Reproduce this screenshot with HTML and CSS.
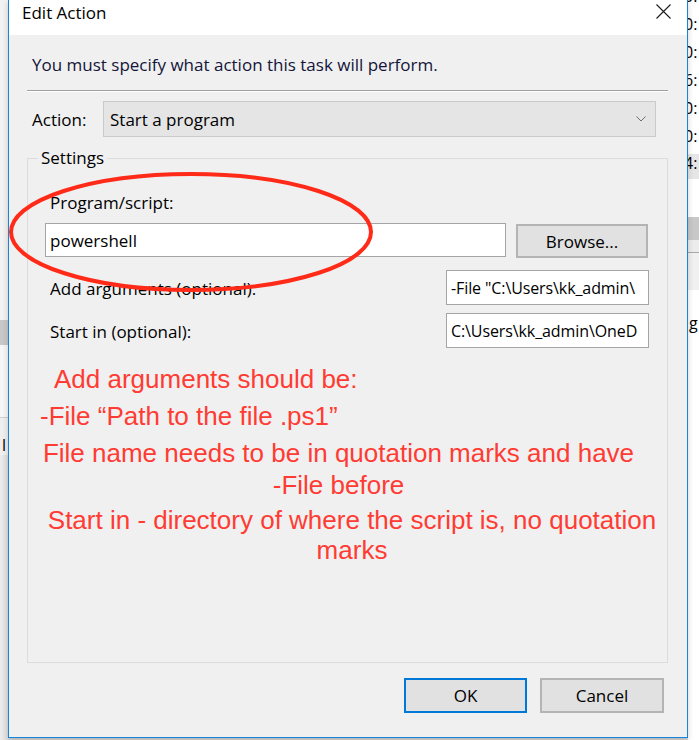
FILE: index.html
```html
<!DOCTYPE html>
<html>
<head>
<meta charset="utf-8">
<link rel="stylesheet" href="styles.css">
</head>
<body>
<div class="screen">
  <div class="bg-left">
    <div class="bl-top"></div>
    <div class="bl-bar"></div>
    <div class="bl-mid"></div>
    <div class="bl-text">l</div>
    <div class="bl-rest"></div>
  </div>

  <div class="dialog">
    <div class="titlebar">
      <span class="title">Edit Action</span>
      <svg class="close" width="15" height="15" viewBox="0 0 15 15"><path d="M0.5 0.5 L14.5 14.5 M14.5 0.5 L0.5 14.5" stroke="#1a1a1a" stroke-width="1.1" fill="none"/></svg>
    </div>
    <div class="body">
      <p class="instruction">You must specify what action this task will perform.</p>
      <div class="sep"></div>
      <div class="action-row">
        <span class="action-label">Action:</span>
        <div class="combo">
          <span>Start a program</span>
          <svg class="chev" width="10" height="6" viewBox="0 0 10 6"><path d="M0.5 0.5 L5 5 L9.5 0.5" stroke="#6d6d6d" stroke-width="1" fill="none"/></svg>
        </div>
      </div>
      <fieldset class="settings">
        <legend>Settings</legend>
        <div class="lbl">Program/script:</div>
        <div class="prog-row">
          <div class="input wide">powershell</div>
          <div class="btn browse">Browse...</div>
        </div>
        <div class="field-row first">
          <span class="lbl">Add arguments (optional):</span>
          <div class="input narrow">-File "C:\Users\kk_admin\</div>
        </div>
        <div class="field-row">
          <span class="lbl">Start in (optional):</span>
          <div class="input narrow">C:\Users\kk_admin\OneD</div>
        </div>
        <div class="notes">
          <p class="n1">Add arguments should be:</p>
          <p class="n2">-File “Path to the file .ps1”</p>
          <p class="n3">File name needs to be in quotation marks and have<br>-File before</p>
          <p class="n4">Start in - directory of where the script is, no quotation<br>marks</p>
        </div>
      </fieldset>
      <div class="buttons">
        <div class="btn ok">OK</div>
        <div class="btn cancel">Cancel</div>
      </div>
    </div>
    <svg class="ellipse" width="400" height="320" viewBox="0 0 400 320"><ellipse cx="182" cy="232" rx="180" ry="58" fill="none" stroke="#ff2a17" stroke-width="4"/></svg>
  </div>

  <div class="bg-right">
    <div class="r-line">0:</div>
    <div class="r-line">0:</div>
    <div class="r-line">0:</div>
    <div class="r-line">6:</div>
    <div class="r-line">0:</div>
    <div class="r-line">0:</div>
    <div class="r-line hl">4:</div>
    <div class="r-gap"></div>
    <div class="r-bar"></div>
    <div class="r-light"></div>
    <div class="r-panel"></div>
    <div class="r-text">g</div>
  </div>
</div>
</body>
</html>
```

FILE: styles.css
```css
* { box-sizing: border-box; }
html, body { margin: 0; padding: 0; }
body {
  width: 699px;
  height: 740px;
  overflow: hidden;
  background: #d6d6d6;
  font-family: "Segoe UI", "Open Sans", "Noto Sans", sans-serif;
  color: #000;
}
.screen { display: flex; height: 740px; align-items: flex-start; }

/* background window, left */
.bg-left { width: 8px; height: 740px; display: flex; flex-direction: column; background: #efefef; overflow: hidden; }
.bl-top { height: 320px; background: #f2f2f2; }
.bl-bar { height: 25px; background: #c8c8c8; }
.bl-mid { height: 73px; background: #f6f6f6; border-bottom: 1px solid #cfcfcf; }
.bl-text { font-size: 16px; line-height: 20px; margin-top: 17px; padding-left: 2px; white-space: nowrap; }
.bl-rest { flex: 1; background: linear-gradient(to right, #ececec, #dedede); }

/* dialog */
.dialog {
  position: relative;
  width: 680px;
  height: 738px;
  background: #f0f0f0;
  border: 1px solid #1883d7;
  border-top: none;
  display: flex;
  flex-direction: column;
  box-shadow: 0 2px 6px rgba(0,0,0,0.18);
}
.titlebar {
  height: 35px;
  background: #fff;
  display: flex;
  justify-content: space-between;
  align-items: flex-start;
  padding: 0 16px 0 13px;
  flex: none;
}
.title { font-size: 17px; line-height: 24px; margin-top: 1px; }
.close { margin-top: 4px; }

.body { flex: 1; display: flex; flex-direction: column; padding: 0 0 24px 0; }
.instruction { margin: 20px 0 0 23px; font-size: 17px; line-height: 20px; color: #14143a; }
.sep { margin: 15px 0 0 18px; width: 641px; height: 2px; border-top: 1px solid #a0a0a0; border-bottom: 1px solid #fff; }

.action-row { display: flex; align-items: center; margin-top: 9px; height: 36px; }
.action-label { width: 80px; margin-left: 14px; padding-left: 9px; font-size: 17px; }
.combo {
  width: 553px;
  height: 36px;
  background: #e5e5e5;
  border: 1px solid #cacaca;
  display: flex;
  align-items: center;
  justify-content: space-between;
  padding: 0 9px 0 6px;
  font-size: 17px;
}

.settings {
  flex: 1;
  margin: 11px 0 0 18px;
  width: 641px;
  min-width: 0;
  border: 1px solid #dcdcdc;
  padding: 0 18px 0 17px;
  display: flex;
  flex-direction: column;
}
.settings legend { padding: 0 3px; font-size: 17px; line-height: 20px; margin-left: -7px; }
.lbl { font-size: 17px; line-height: 20px; padding-left: 5px; }
.settings > .lbl { margin-top: 25px; }

.prog-row { display: flex; align-items: flex-start; margin-top: 10px; }
.input {
  background: #fff;
  border: 1px solid #a5a5a5;
  font-size: 17px;
  display: flex;
  align-items: center;
  padding-left: 4px;
  white-space: nowrap;
  overflow: hidden;
}
.input.wide { width: 461px; height: 34px; }
.input.narrow { width: 203px; height: 35px; font-size: 16px; letter-spacing: -0.1px; }

.btn {
  background: #e1e1e1;
  border: 2px solid #b4b4b4;
  font-size: 17px;
  display: flex;
  align-items: center;
  justify-content: center;
}
.browse { width: 132px; height: 34px; margin: 1px 0 0 10px; }

.field-row { display: flex; justify-content: space-between; align-items: center; margin-top: 8px; }
.field-row.first { margin-top: 12px; }
.field-row .lbl { margin-top: 2px; }

.notes { margin: 16px 0 0 -17px; color: #ff3b33; font-family: "Liberation Sans", Arial, sans-serif; font-size: 26px; }
.notes p { margin: 0; line-height: 30px; white-space: nowrap; }
.n1 { padding-left: 26px; }
.n2 { margin-top: 7px !important; padding-left: 12px; }
.n3 { margin-top: 6px !important; line-height: 32px !important; text-align: center; }
.n4 { margin: 4px -18px 0 0 !important; text-align: center; padding-left: 9px; }

.buttons { display: flex; justify-content: flex-end; gap: 13px; margin: 15px 23px 0 0; }
.ok { width: 123px; height: 35px; border-color: #0078d7; }
.cancel { width: 124px; height: 35px; }

.ellipse { position: absolute; left: 0; top: 0; pointer-events: none; }

/* background window, right */
.bg-right { width: 11px; height: 740px; display: flex; flex-direction: column; background: #fff; overflow: hidden; }
.r-line { height: 28px; line-height: 28px; font-size: 16px; margin-left: -4px; white-space: nowrap; flex: none; }
.r-line:first-child { margin-top: -18px; }
.r-line.hl { background: #e6e6e6; height: 25px; margin-top: 4px; line-height: 18px; }
.r-gap { height: 38px; flex: none; background: #fff; }
.r-bar { height: 23px; background: #c8c8c8; flex: none; }
.r-light { height: 13px; background: #ececec; border-bottom: 1px solid #a9a9a9; flex: none; }
.r-panel { height: 37px; background: #f0f0f0; flex: none; }
.r-text { font-size: 16px; line-height: 20px; margin-top: 23px; padding-left: 1px; white-space: nowrap; }
```
